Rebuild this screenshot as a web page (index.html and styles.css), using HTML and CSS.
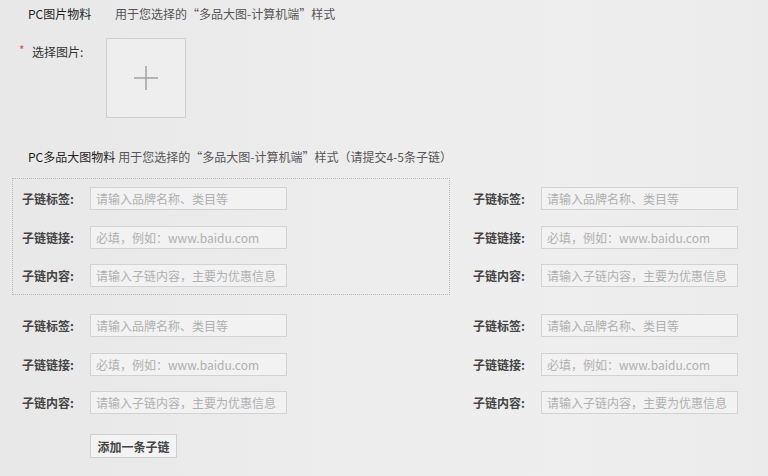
FILE: index.html
```html
<!DOCTYPE html>
<html lang="zh-CN">
<head>
<meta charset="utf-8">
<title>PC图片物料</title>
<link rel="stylesheet" href="styles.css">
</head>
<body>
<div class="page">
  <div class="section-head head-1">
    <span class="sec-title">PC图片物料</span>
    <span class="sec-desc">用于您选择的“多品大图-计算机端”样式</span>
  </div>

  <div class="upload-row">
    <span class="req">*</span>
    <span class="upload-label">选择图片:</span>
    <div class="upload-box">
      <svg width="26" height="26" viewBox="0 0 26 26"><path d="M13 1v24M1 13h24" stroke="#a3a3a3" stroke-width="1.5" fill="none"/></svg>
    </div>
  </div>

  <div class="section-head head-2">
    <span class="sec-title">PC多品大图物料</span>
    <span class="sec-desc">用于您选择的“多品大图-计算机端”样式（请提交4-5条子链）</span>
  </div>

  <div class="groups">
    <div class="group active">
      <div class="row"><span class="lbl">子链标签:</span><input class="inp" placeholder="请输入品牌名称、类目等"></div>
      <div class="row"><span class="lbl">子链链接:</span><input class="inp" placeholder="必填，例如：www.baidu.com"></div>
      <div class="row"><span class="lbl">子链内容:</span><input class="inp" placeholder="请输入子链内容，主要为优惠信息"></div>
    </div>
    <div class="group">
      <div class="row"><span class="lbl">子链标签:</span><input class="inp" placeholder="请输入品牌名称、类目等"></div>
      <div class="row"><span class="lbl">子链链接:</span><input class="inp" placeholder="必填，例如：www.baidu.com"></div>
      <div class="row"><span class="lbl">子链内容:</span><input class="inp" placeholder="请输入子链内容，主要为优惠信息"></div>
    </div>
    <div class="group">
      <div class="row"><span class="lbl">子链标签:</span><input class="inp" placeholder="请输入品牌名称、类目等"></div>
      <div class="row"><span class="lbl">子链链接:</span><input class="inp" placeholder="必填，例如：www.baidu.com"></div>
      <div class="row"><span class="lbl">子链内容:</span><input class="inp" placeholder="请输入子链内容，主要为优惠信息"></div>
    </div>
    <div class="group">
      <div class="row"><span class="lbl">子链标签:</span><input class="inp" placeholder="请输入品牌名称、类目等"></div>
      <div class="row"><span class="lbl">子链链接:</span><input class="inp" placeholder="必填，例如：www.baidu.com"></div>
      <div class="row"><span class="lbl">子链内容:</span><input class="inp" placeholder="请输入子链内容，主要为优惠信息"></div>
    </div>
  </div>

  <div class="actions">
    <button class="btn">添加一条子链</button>
  </div>
</div>
</body>
</html>
```

FILE: styles.css
```css
html, body {
  margin: 0;
  padding: 0;
}
body {
  width: 768px;
  height: 476px;
  overflow: hidden;
  background: linear-gradient(90deg, #e8e8e8 0%, #ededed 50%, #eeeeee 75%, #ebebeb 100%);
  font-family: "Noto Sans CJK SC", "Noto Sans", sans-serif;
  font-size: 12px;
  color: #333;
}
.page {
  padding: 4px 0 0 0;
}
.section-head {
  display: flex;
  align-items: center;
  height: 20px;
  line-height: 20px;
  padding-left: 28px;
  white-space: nowrap;
}
.sec-title {
  min-width: 87px;
  flex: none;
  color: #1e1e1e;
  font-weight: 400;
}
.head-2 .sec-title {
  min-width: 0;
  margin-right: 3px;
}
.sec-desc {
  color: #555;
}
.upload-row {
  display: flex;
  align-items: flex-start;
  margin-top: 14px;
  padding-left: 19px;
  height: 80px;
}
.req {
  color: #d9534f;
  width: 13px;
  line-height: 22px;
  padding-top: 1px;
  font-size: 12px;
}
.upload-label {
  width: 74px;
  line-height: 16px;
  padding-top: 6px;
  color: #333;
}
.upload-box {
  width: 78px;
  height: 78px;
  border: 1px solid #cfcfcf;
  background: #eeeeee;
  display: flex;
  align-items: center;
  justify-content: center;
}
.head-2 {
  margin-top: 29px;
}
.groups {
  display: grid;
  grid-template-columns: 438px 300px;
  column-gap: 13px;
  row-gap: 10px;
  margin-top: 11px;
  padding-left: 12px;
}
.group {
  padding: 8px 0 7px 9px;
  border: 1px dotted transparent;
  display: flex;
  flex-direction: column;
  gap: 15.5px;
}
.group.active {
  border-color: #b8b8b8;
}
.row {
  display: flex;
  align-items: center;
  height: 23px;
}
.lbl {
  width: 68px;
  flex: none;
  font-weight: 700;
  color: #444;
}
.inp {
  box-sizing: border-box;
  width: 197px;
  height: 23px;
  border: 1px solid #d2d2d2;
  background: #f2f2f2;
  padding: 0 5px;
  margin: 0;
  font-family: "Noto Sans CJK SC", "Noto Sans", sans-serif;
  font-size: 12px;
  color: #333;
  outline: none;
}
.inp::placeholder {
  color: #b0b0b0;
}
.actions {
  padding-left: 90px;
  margin-top: 12px;
}
.btn {
  box-sizing: border-box;
  width: 87px;
  height: 24px;
  border: 1px solid #cfcfcf;
  background: #f3f3f3;
  font-family: "Noto Sans CJK SC", "Noto Sans", sans-serif;
  font-size: 12px;
  font-weight: 700;
  color: #444;
  padding: 0;
  border-radius: 0;
}
```
